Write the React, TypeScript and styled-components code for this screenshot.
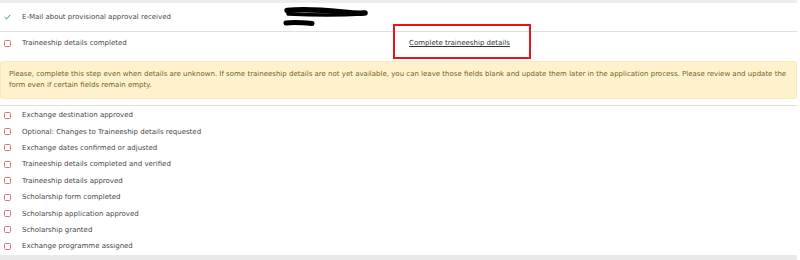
import React from "react";
import styled, { createGlobalStyle } from "styled-components";

const Global = createGlobalStyle`
  html, body { margin: 0; padding: 0; background: #fff; }
  body { font-family: "DejaVu Sans", Verdana, sans-serif; width: 800px; height: 260px; overflow: hidden; }
`;

const Page = styled.div`
  width: 797px;
  display: flex;
  flex-direction: column;
`;

const TopBand = styled.div`
  height: 3px;
  background: #ececec;
`;

const StepRow = styled.div<{ $h: number; $line?: boolean }>`
  display: grid;
  grid-template-columns: 22px 260px 127px 1fr;
  align-items: center;
  height: ${(p) => p.$h}px;
  font-size: 7px;
  color: #474747;
  border-bottom: ${(p) => (p.$line ? "1px solid #e0e0e0" : "none")};
  position: relative;
`;

const IconCell = styled.div`
  display: flex;
  align-items: center;
  padding-left: 4px;
`;

const Label = styled.span`
  white-space: nowrap;
`;

const Redacted = styled.div`
  display: flex;
  align-items: center;
`;

const Link = styled.a`
  color: #333;
  text-decoration: underline;
  white-space: nowrap;
  font-size: 7px;
`;

const Annotation = styled.div`
  position: absolute;
  left: 393px;
  top: -8px;
  width: 134px;
  height: 31px;
  border: 2px solid #e8141c;
  pointer-events: none;
`;

const Alert = styled.div`
  margin-top: 7px;
  padding: 7px 8px;
  background: #fef2cc;
  border: 1px solid #fbeab8;
  border-radius: 2px;
  color: #77601a;
  font-size: 7px;
  line-height: 11px;
`;

const Divider = styled.div`
  height: 1px;
  background: #e0e0e0;
  margin-top: 6px;
`;

const List = styled.div`
  display: flex;
  flex-direction: column;
  padding-top: 1px;
`;

const ListRow = styled.div`
  display: grid;
  grid-template-columns: 22px 1fr;
  align-items: center;
  height: 16.4px;
  font-size: 7px;
  color: #474747;
`;

const BottomBand = styled.div`
  height: 10px;
  background: #e9e9e9;
`;

const Check = () => (
  <svg width="7" height="6" viewBox="0 0 7 6">
    <path d="M0.7 3.2 L2.6 5 L6.3 0.8" fill="none" stroke="#3c9a56" strokeWidth="1" />
  </svg>
);

const Box = () => (
  <svg width="7" height="7" viewBox="0 0 7 7">
    <rect x="0.5" y="0.5" width="6" height="6" rx="1" fill="#fff" stroke="#e0707a" strokeWidth="1" />
  </svg>
);

const Scribble = () => (
  <svg width="90" height="22" viewBox="0 0 90 22">
    <path d="M5 4.5 C 20 3, 40 4, 60 6 S 80 7, 83 7" stroke="#000" strokeWidth="5.5" strokeLinecap="round" fill="none" />
    <path d="M6 8 C 25 9, 50 10, 80 8" stroke="#000" strokeWidth="3.5" strokeLinecap="round" fill="none" />
    <path d="M4 17 C 10 16, 20 16.5, 30 17.5" stroke="#000" strokeWidth="5" strokeLinecap="round" fill="none" />
  </svg>
);

const steps = [
  "Exchange destination approved",
  "Optional: Changes to Traineeship details requested",
  "Exchange dates confirmed or adjusted",
  "Traineeship details completed and verified",
  "Traineeship details approved",
  "Scholarship form completed",
  "Scholarship application approved",
  "Scholarship granted",
  "Exchange programme assigned",
];

export default function App() {
  return (
    <>
      <Global />
      <Page>
        <TopBand />
        <StepRow $h={28} $line>
          <IconCell><Check /></IconCell>
          <Label>E-Mail about provisional approval received</Label>
          <Redacted><Scribble /></Redacted>
          <span />
        </StepRow>
        <StepRow $h={22}>
          <IconCell><Box /></IconCell>
          <Label>Traineeship details completed</Label>
          <span />
          <Link>Complete traineeship details</Link>
          <Annotation />
        </StepRow>
        <Alert>
          Please, complete this step even when details are unknown. If some traineeship details are not yet available, you can leave those fields blank and update them later in the application process. Please review and update the form even if certain fields remain empty.
        </Alert>
        <Divider />
        <List>
          {steps.map((s) => (
            <ListRow key={s}>
              <IconCell><Box /></IconCell>
              <Label>{s}</Label>
            </ListRow>
          ))}
        </List>
        <BottomBand />
      </Page>
    </>
  );
}
